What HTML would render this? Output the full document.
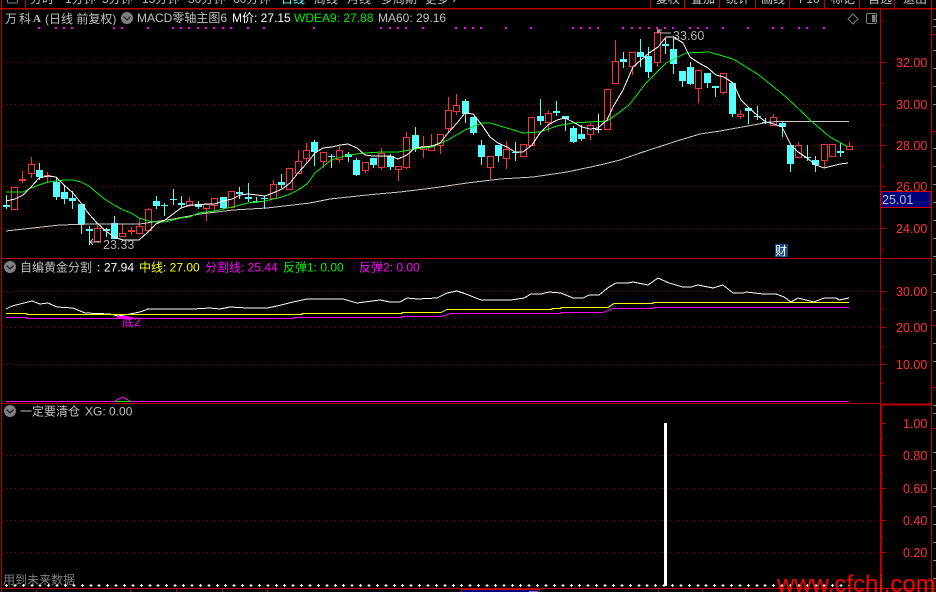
<!DOCTYPE html>
<html><head><meta charset="utf-8"><title>万科A</title>
<style>
html,body{margin:0;padding:0;background:#000;width:936px;height:592px;overflow:hidden}
svg{display:block}
text{font-family:"Liberation Sans","Noto Sans CJK SC",sans-serif;font-size:12px}
.ax{fill:#ff3232;font-size:12.5px}
.t{fill:#c0c0c0}
.l{fill:none;shape-rendering:crispEdges}
</style></head><body>
<svg width="936" height="592" viewBox="0 0 936 592" xmlns="http://www.w3.org/2000/svg">
<rect width="936" height="592" fill="#000"/>

<!-- top tabs -->
<g class="t" style="fill:#c0c0c0">
<text x="30" y="3">分时</text><text x="65" y="3">1分钟</text><text x="102" y="3">5分钟</text><text x="142" y="3">15分钟</text><text x="188" y="3">30分钟</text><text x="233" y="3">60分钟</text>
<text x="281" y="3" style="fill:#54ffff">日线</text>
<text x="314" y="3">周线</text><text x="347" y="3">月线</text><text x="381" y="3">多周期</text><text x="425" y="3">更多 ›</text>
<text x="656" y="3">复权</text><text x="691" y="3">叠加</text><text x="726" y="3">统计</text><text x="761" y="3">画线</text><text x="799" y="3">F10</text><text x="831" y="3">标记</text><text x="868" y="3">自选</text><text x="903" y="3">退出</text>
</g>
<rect x="7.5" y="-4" width="10" height="7" rx="1" fill="none" stroke="#808080"/>

<!-- grid -->
<g stroke="#8c0000" stroke-width="1" stroke-dasharray="1 3" shape-rendering="crispEdges">
<path d="M3 62.5H880M3 104.5H880M3 145.5H880M3 186.5H880M3 228.5H880M3 291.5H880M3 327.5H880M3 364.5H880M3 455.5H880M3 488.5H880M3 520.5H880M3 552.5H880"/>
</g>

<!-- frame -->
<g stroke="#b80000" fill="none" shape-rendering="crispEdges">
<path d="M0 8.5H936" stroke-width="1.5"/>
<path d="M25.5 0V8M650.5 0V8M684.5 0V8M719.5 0V8M755.5 0V8M789.5 0V8M824.5 0V8M859.5 0V8M894.5 0V8"/>
<path d="M1.5 0V592" stroke-width="1"/>
<path d="M880.5 8V589M931.5 0V592"/>
<path d="M2 258.5H931M2 403.5H880"/>
<path d="M881 404.5H931" stroke-width="2"/>
<path d="M881 404V589" stroke-width="2"/>
<path d="M2 588.5H931"/>
<path d="M880 62.5h6M880 104.5h6M880 145.5h6M880 186.5h6M880 228.5h6M880 21.5h3M880 83.5h3M880 125.5h3M880 166.5h3M880 207.5h3M880 249.5h3"/>
<path d="M880 291.5h6M880 327.5h6M880 364.5h6M880 309.5h3M880 346.5h3M880 383.5h3"/>
<path d="M880 423.5h6M880 455.5h6M880 488.5h6M880 520.5h6M880 552.5h6M880 439.5h3M880 472.5h3M880 505.5h3M880 536.5h3M880 569.5h3"/>
<path d="M130.5 589V592M176.5 589V592M222.5 589V592M267.5 589V592M658.5 589V592M702.5 589V592M745.5 589V592M36.5 590V592"/>
<path d="M931 34.5h5M931 131.5h5M931 325.5h5M931 387.5h5M931 428.5h5"/>
</g>
<path stroke="#8a8a8a" shape-rendering="crispEdges" d="M933 19.5h3M933 26.5h3M933 50.5h3M933 68.5h3M933 86.5h3M933 104.5h3M933 148.5h3M933 166.5h3M933 184.5h3M933 202.5h3M933 220.5h3M933 238.5h3M933 256.5h3M933 274.5h3M933 292.5h3M933 310.5h3M933 343.5h3M933 361.5h3M933 405.5h3M933 413.5h3M933 452.5h3M933 470.5h3M933 488.5h3M933 506.5h3M933 524.5h3M933 542.5h3M933 560.5h3M933 578.5h3"/>

<!-- purple dots -->
<path fill="#ff00ff" d="M38 27h2v2h-2zM55 27h2v2h-2zM63 27h2v2h-2zM71 27h2v2h-2zM113 27h2v2h-2zM121 27h2v2h-2zM147 27h2v2h-2zM172 27h2v2h-2zM180 27h2v2h-2zM188 27h2v2h-2zM197 27h2v2h-2zM205 27h2v2h-2zM213 27h2v2h-2zM222 27h2v2h-2zM230 27h2v2h-2zM247 27h2v2h-2zM263 27h2v2h-2zM313 27h2v2h-2zM380 27h2v2h-2zM389 27h2v2h-2zM397 27h2v2h-2zM405 27h2v2h-2zM422 27h2v2h-2zM455 27h2v2h-2zM464 27h2v2h-2zM472 27h2v2h-2zM480 27h2v2h-2zM505 27h2v2h-2zM530 27h2v2h-2zM572 27h2v2h-2zM580 27h2v2h-2zM589 27h2v2h-2zM597 27h2v2h-2zM622 27h2v2h-2zM631 27h2v2h-2zM639 27h2v2h-2zM648 27h2v2h-2zM656 27h2v2h-2zM664 27h2v2h-2zM672 27h2v2h-2zM689 27h2v2h-2zM697 27h2v2h-2zM706 27h2v2h-2zM722 27h2v2h-2zM747 27h2v2h-2zM772 27h2v2h-2zM781 27h2v2h-2zM798 27h2v2h-2zM806 27h2v2h-2zM823 27h2v2h-2z"/>

<!-- red wicks -->
<path stroke="#ff3232" fill="none" shape-rendering="crispEdges" d="M22.5 171V183M31.5 157V178M47.5 172V183M97.5 225V241M122.5 224V235M131.5 227V235M139.5 218V234M148.5 208V231M189.5 197V207M206.5 204V221M214.5 198V211M231.5 191V207M273.5 180V198M298.5 150V173M306.5 143V163M323.5 152V168M339.5 146V163M365.5 162V173M381.5 148V170M398.5 166V181M406.5 132V169M423.5 136V158M431.5 134V151M440.5 134V154M448.5 97V133M456.5 94V115M490.5 156V179M506.5 141V169M548.5 110V132M590.5 123V140M615.5 40V83M632.5 52V75M657.5 28V67M698.5 70V103M723.5 73V94M740.5 110V119M773.5 114V126M798.5 142V157M824.5 144V168M849.5 142V149"/>
<!-- red bodies -->
<path stroke="#ff3232" fill="#000" shape-rendering="crispEdges" d="M11.5 187.5h6v22h-6zM19.5 179.5h6v1h-6zM28.5 164.5h6v9h-6zM44.5 175.5h6v1h-6zM94.5 228.5h6v13h-6zM119.5 233.5h6v3h-6zM128.5 230.5h6v1h-6zM136.5 226.5h6v7h-6zM145.5 209.5h6v21h-6zM186.5 201.5h6v4h-6zM203.5 204.5h6v4h-6zM211.5 198.5h6v7h-6zM228.5 191.5h6v16h-6zM270.5 184.5h6v14h-6zM286.5 168.5h6v21h-6zM295.5 161.5h6v12h-6zM303.5 150.5h6v8h-6zM320.5 152.5h6v9h-6zM336.5 150.5h6v9h-6zM362.5 162.5h6v8h-6zM378.5 153.5h6v14h-6zM395.5 166.5h6v3h-6zM403.5 137.5h6v30h-6zM420.5 146.5h6v3h-6zM428.5 146.5h6v4h-6zM437.5 134.5h6v11h-6zM445.5 110.5h6v18h-6zM453.5 105.5h6v6h-6zM487.5 156.5h6v11h-6zM503.5 149.5h6v9h-6zM520.5 144.5h6v12h-6zM528.5 117.5h6v28h-6zM545.5 113.5h6v9h-6zM587.5 125.5h6v9h-6zM604.5 89.5h6v40h-6zM612.5 61.5h6v22h-6zM629.5 52.5h6v14h-6zM654.5 32.5h6v30h-6zM695.5 70.5h6v18h-6zM720.5 73.5h6v19h-6zM737.5 114.5h6v2h-6zM770.5 117.5h6v8h-6zM795.5 145.5h6v12h-6zM821.5 144.5h6v16h-6zM829.5 144.5h6v12h-6zM846.5 146.5h6v3h-6z"/>
<!-- cyan wicks -->
<path stroke="#54ffff" fill="none" shape-rendering="crispEdges" d="M6.5 195V209M39.5 163V180M56.5 178V200M64.5 185V204M72.5 191V209M81.5 204V234M89.5 226V245M106.5 228V237M114.5 216V239M156.5 196V209M164.5 203V216M173.5 189V205M181.5 196V207M198.5 201V209M223.5 197V209M239.5 187V199M248.5 183V202M256.5 197V203M264.5 196V209M281.5 174V188M314.5 140V166M331.5 154V168M348.5 152V162M356.5 158V176M373.5 158V168M390.5 154V170M415.5 127V152M465.5 99V123M473.5 117V135M481.5 140V165M498.5 145V162M515.5 142V161M540.5 99V125M556.5 101V116M565.5 116V131M573.5 126V143M581.5 125V141M623.5 52V68M640.5 39V67M648.5 47V78M665.5 37V54M673.5 38V74M682.5 71V87M690.5 62V85M707.5 73V88M715.5 86V97M732.5 83V117M748.5 108V124M757.5 106V120M765.5 118V124M782.5 122V137M790.5 145V172M807.5 145V161M815.5 156V172M840.5 143V157"/>
<!-- cyan bodies -->
<path fill="#54ffff" shape-rendering="crispEdges" d="M3 205h7v2h-7zM36 170h7v7h-7zM53 182h7v15h-7zM61 192h7v7h-7zM69 198h7v3h-7zM78 204h7v20h-7zM86 229h7v2h-7zM103 229h7v2h-7zM111 223h7v16h-7zM153 201h7v5h-7zM161 205h7v1h-7zM170 199h7v1h-7zM178 203h7v2h-7zM195 204h7v3h-7zM220 197h7v11h-7zM236 192h7v2h-7zM245 197h7v2h-7zM253 201h7v1h-7zM261 198h7v1h-7zM278 182h7v3h-7zM311 142h7v10h-7zM328 156h7v1h-7zM345 154h7v3h-7zM353 160h7v15h-7zM370 158h7v7h-7zM387 156h7v11h-7zM412 135h7v14h-7zM462 101h7v13h-7zM470 117h7v16h-7zM478 145h7v12h-7zM495 145h7v11h-7zM512 152h7v1h-7zM537 116h7v5h-7zM553 111h7v2h-7zM562 116h7v3h-7zM570 128h7v14h-7zM578 134h7v5h-7zM620 59h7v3h-7zM637 52h7v5h-7zM645 56h7v16h-7zM662 44h7v2h-7zM670 49h7v15h-7zM679 71h7v10h-7zM687 67h7v17h-7zM704 73h7v10h-7zM712 86h7v2h-7zM729 83h7v31h-7zM745 108h7v3h-7zM754 116h7v1h-7zM762 122h7v1h-7zM779 123h7v4h-7zM787 145h7v19h-7zM804 157h7v1h-7zM812 160h7v5h-7zM837 151h7v2h-7z"/>
<path stroke="#fff" fill="none" shape-rendering="crispEdges" d="M598.5 114V133M595 129.5h7"/>

<!-- MA60 -->
<polyline class="l" stroke="#c8c8c8" points="6,231 33,228 60,225 93,224 140,224 173,219 200,214 233,210 267,208 310,203 330,199 367,195 400,192 433,188 467,183 500,179 533,177 567,172 600,165 620,160 640,153 680,140 700,134 720,131 753,125 770,122 778,121.5 849,121.5"/>
<!-- MA green -->
<polyline class="l" stroke="#00f000" points="6,192 15,192 23,192 31,188 39,185 48,182 56,181 64,180 73,180 81,182 89,186 97,193 106,200 114,205 123,210 131,213 139,218 148,221 156,222 165,222 173,220 181,218 190,217 198,213 206,212 215,211 223,209 232,207 240,205 248,203 257,202 265,201 273,199 282,197 290,194 298,190 307,184 315,173 331,160 348,155 365,153 382,152 398,152 415,149 432,147 448,140 465,130 482,123 490,123 507,128 523,133 540,132 557,126 573,123 590,122 607,121 613,117 629,105 646,83 666,63 686,53 709,52 733,59 759,75 786,97 803,113 810,120 830,137 848,147"/>
<!-- MA white -->
<polyline class="l" stroke="#fff" points="6,201 15,199 23,195 31,187 39,178 48,176 56,177 64,185 73,193 81,203 89,214 97,223 106,231 114,237 123,240 131,240 139,240 148,232 156,224 165,220 173,214 181,208 190,205 198,205 206,204 215,204 223,201 232,199 240,195 248,194 257,195 265,196 273,193 282,189 290,183 298,173 307,163 315,153 323,148 332,147 340,145 348,144 357,148 365,155 373,156 382,156 390,156 398,159 407,155 415,148 423,147 432,146 440,143 448,133 457,123 465,113 473,114 482,125 490,137 498,143 507,147 515,152 523,152 532,145 540,133 548,125 557,120 565,118 573,122 582,127 590,129 598,128 607,120 613,107 623,90 633,67 649,53 658,47 666,37 674,37 683,43 690,57 699,63 708,68 716,75 724,77 733,83 741,100 749,108 758,116 766,122 774,124 782,127 791,145 798,152 807,158 816,165 824,168 832,166 840,164 848,163"/>

<!-- high/low marks -->
<text x="673" y="40" style="fill:#b0b0b0;font-size:12.5px">33.60</text>
<path stroke="#c0c0c0" fill="none" shape-rendering="crispEdges" d="M658 30l3 3h10M658 30v4M658 30h4"/>
<text x="103" y="249" style="fill:#b0b0b0;font-size:12.5px">23.33</text>
<path stroke="#c0c0c0" fill="none" shape-rendering="crispEdges" d="M90 242h11M90 242l3-3M90 242l3 3"/>

<!-- main header -->
<text x="5" y="23" style="fill:#c0c0c0;font-size:12px">万</text>
<text x="19" y="23" style="fill:#c0c0c0;font-size:12px">科</text>
<text x="33" y="22" style="fill:#c0c0c0;font-family:'Liberation Serif',serif;font-weight:bold;font-size:11px">A</text>
<text x="45" y="23" style="fill:#c0c0c0;font-size:12px">(日线 前复权)</text>
<circle cx="127" cy="18" r="6" fill="#808080"/><path d="M123.5 16.5l3.5 3.5 3.5-3.5" fill="none" stroke="#222" stroke-width="1.3"/>
<text x="137" y="22" style="fill:#c0c0c0">MACD零轴主图6</text>
<text x="232" y="22" style="fill:#fff">M价: 27.15</text>
<text x="294" y="22" style="fill:#00f000">WDEA9: 27.88</text>
<text x="378" y="22" style="fill:#c0c0c0">MA60: 29.16</text>
<path d="M853 14l5 5-5 5-5-5z" fill="none" stroke="#808080"/>
<rect x="866.5" y="13.5" width="10" height="10" rx="1.5" fill="none" stroke="#808080"/><rect x="872" y="15" width="3.5" height="7" fill="#808080"/>

<!-- axis labels -->
<g>
<text class="ax" x="896" y="67">32.00</text><text class="ax" x="896" y="109">30.00</text><text class="ax" x="896" y="150">28.00</text><text class="ax" x="896" y="191">26.00</text><text class="ax" x="896" y="233">24.00</text>
<text class="ax" x="896" y="296">30.00</text><text class="ax" x="896" y="332">20.00</text><text class="ax" x="896" y="369">10.00</text>
<text class="ax" x="903" y="428">1.00</text><text class="ax" x="903" y="460">0.80</text><text class="ax" x="903" y="493">0.60</text><text class="ax" x="903" y="525">0.40</text><text class="ax" x="903" y="557">0.20</text>
</g>
<rect x="881" y="191.5" width="50" height="16" fill="#00007f" stroke="#d00000"/>
<text x="882" y="204" style="fill:#c0c0c0;font-size:12.5px">25.01</text>
<rect x="775" y="244" width="13" height="13" fill="#17497c"/>
<text x="775" y="255" style="fill:#fff;font-size:12px">财</text>

<!-- panel 2 -->
<circle cx="10" cy="267" r="6" fill="#808080"/><path d="M6.5 265.5l3.5 3.5 3.5-3.5" fill="none" stroke="#222" stroke-width="1.3"/>
<text x="20" y="271.500" style="fill:#c0c0c0">自编黄金分割</text><text x="97" y="271.500" style="fill:#fff">:</text><text x="104" y="271.500" style="fill:#fff">27.94</text>
<text x="139" y="271.500" style="fill:#ffff00">中线: 27.00</text>
<text x="205" y="271.500" style="fill:#ff00ff">分割线: 25.44</text>
<text x="283" y="271.500" style="fill:#00f000">反弹1: 0.00</text>
<text x="359" y="271.500" style="fill:#ff00ff">反弹2: 0.00</text>
<polyline class="l" stroke="#fff" points="6,309 12,306 20,304 32,301 40,304 48,303 57,307 73,308 85,313 110,314 118,316 130,314 140,312 148,309 167,309 180,309 193,309 210,308 220,309 230,307 247,308 267,308 277,306 293,302 307,299 330,299 343,299 357,303 380,300 390,302 400,302 407,298 417,299 437,298 447,293 457,291 466,294 481,300 501,300 511,300 524,298 531,294 541,294 549,292 561,293 573,298 583,298 589,295 599,295 609,287 616,283 628,283 633,282 648,285 658,278 669,283 683,287 691,287 698,285 713,288 723,285 733,293 744,293 746,292 763,294 776,294 784,297 791,302 798,298 814,302 824,298 836,298 839,300 849,298"/>
<path class="l" stroke="#ffff00" d="M6 313.500H27V314.500H302V313.500H402V312.500H441L447 309.500H552V308.500H561V307.500H608L614 303.500H653V302.500H849"/>
<path class="l" stroke="#ff00ff" d="M6 317.500H27V318.500H294V317.500H402V316.500H441L451 313.500H561V312.500H603L613 308.500H653V307.500H849"/>
<rect x="117" y="316" width="11" height="2" fill="#ff00ff"/>
<text x="122" y="326" style="fill:#ff00ff;font-size:12px">底2</text>
<path class="l" stroke="#ff00ff" d="M6 401.500H849M115 401L122.500 397L130 401"/>
<path class="l" stroke="#00f000" d="M115 401.500H130"/>

<!-- panel 3 -->
<circle cx="10" cy="411" r="6" fill="#808080"/><path d="M6.5 409.500l3.5 3.5 3.5-3.5" fill="none" stroke="#222" stroke-width="1.3"/>
<text x="20" y="415.500" style="fill:#c0c0c0">一定要清仓</text>
<text x="85" y="415.500" style="fill:#c0c0c0">XG: 0.00</text>
<rect x="664" y="423" width="3" height="163" fill="#fff"/>
<text x="3" y="584" style="fill:#808080">用到未来数据</text>
<g stroke="#fff" fill="none" shape-rendering="crispEdges">
<path d="M5 585.500H850" stroke-dasharray="3 5.430"/>
<path d="M6 585.500H850" stroke-width="3" stroke-dasharray="1 7.430"/>
</g>
<rect x="461.500" y="589.500" width="78" height="4" fill="#00007f" stroke="#d00000"/>
<text x="464" y="600.500" style="fill:#fff;font-size:12px">2014/03/28/五</text>
<text x="777" y="592" style="fill:#ff0000;font-size:24px">www.cfchi.com</text>
</svg>
</body></html>
